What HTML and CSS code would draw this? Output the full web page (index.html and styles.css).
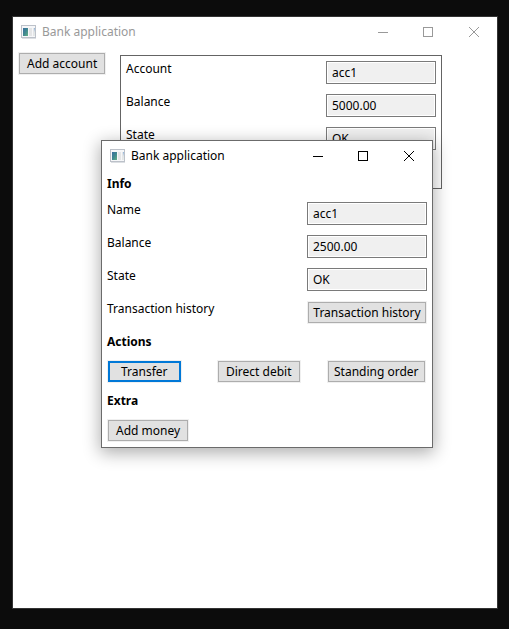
FILE: index.html
```html
<!DOCTYPE html>
<html lang="en">
<head>
<meta charset="utf-8">
<title>Bank application</title>
<link rel="stylesheet" href="styles.css">
</head>
<body>
<svg class="defs" aria-hidden="true">
  <defs>
    <linearGradient id="pane" x1="0" y1="0" x2="1" y2="1">
      <stop offset="0" stop-color="#3a6ea0"/>
      <stop offset="0.5" stop-color="#3f8790"/>
      <stop offset="1" stop-color="#63b083"/>
    </linearGradient>
    <linearGradient id="strip" x1="0" y1="0" x2="0" y2="1">
      <stop offset="0" stop-color="#8fb4dc"/>
      <stop offset="0.5" stop-color="#dfe5e8"/>
      <stop offset="1" stop-color="#e8ece8"/>
    </linearGradient>
    <symbol id="app" viewBox="0 0 16 14">
      <rect x="0.5" y="0.5" width="14" height="12" fill="#f6f7f9" stroke="#bcc1c9"/>
      <path d="M1 13.5H15" stroke="#dcdfe3"/>
      <rect x="2" y="3" width="5" height="8" fill="url(#pane)"/>
      <rect x="8" y="3" width="3" height="8" fill="#e4e5e6"/>
      <rect x="12" y="3" width="1" height="8" fill="#e4e5e6"/>
      <rect x="13" y="3" width="1" height="8" fill="url(#strip)"/>
    </symbol>
    <symbol id="min" viewBox="0 0 12 10"><path d="M2 5.5H12" stroke="currentColor"/></symbol>
    <symbol id="max" viewBox="0 0 12 10"><rect x="1.5" y="0.5" width="9" height="9" fill="none" stroke="currentColor"/></symbol>
    <symbol id="close" viewBox="0 0 12 10"><path d="M1 0L11 10M11 0L1 10" stroke="currentColor"/></symbol>
  </defs>
</svg>

<main class="window window-main">
  <header class="titlebar inactive">
    <svg class="app-icon"><use href="#app"/></svg>
    <h1 class="title">Bank application</h1>
    <button class="control" aria-label="Minimize"><svg><use href="#min"/></svg></button>
    <button class="control" aria-label="Maximize"><svg><use href="#max"/></svg></button>
    <button class="control" aria-label="Close"><svg><use href="#close"/></svg></button>
  </header>
  <div class="workspace">
    <button class="btn">Add account</button>
    <section class="card">
      <div class="row"><label for="a-name">Account</label><input class="field" id="a-name" value="acc1" readonly></div>
      <div class="row"><label for="a-balance">Balance</label><input class="field" id="a-balance" value="5000.00" readonly></div>
      <div class="row"><label for="a-state">State</label><input class="field" id="a-state" value="OK" readonly></div>
    </section>
  </div>
</main>

<section class="window dialog" role="dialog" aria-labelledby="dialog-title">
  <header class="titlebar">
    <svg class="app-icon"><use href="#app"/></svg>
    <h1 class="title" id="dialog-title">Bank application</h1>
    <button class="control" aria-label="Minimize"><svg><use href="#min"/></svg></button>
    <button class="control" aria-label="Maximize"><svg><use href="#max"/></svg></button>
    <button class="control" aria-label="Close"><svg><use href="#close"/></svg></button>
  </header>
  <div class="form">
    <h2 class="heading">Info</h2>
    <div class="row"><label for="d-name">Name</label><input class="field" id="d-name" value="acc1" readonly></div>
    <div class="row"><label for="d-balance">Balance</label><input class="field" id="d-balance" value="2500.00" readonly></div>
    <div class="row"><label for="d-state">State</label><input class="field" id="d-state" value="OK" readonly></div>
    <div class="row"><label for="d-history">Transaction history</label><button class="btn btn-fill" id="d-history">Transaction history</button></div>
    <h2 class="heading">Actions</h2>
    <div class="actions">
      <button class="btn btn-default">Transfer</button>
      <button class="btn">Direct debit</button>
      <button class="btn btn-tight">Standing order</button>
    </div>
    <h2 class="heading">Extra</h2>
    <div class="actions">
      <button class="btn">Add money</button>
    </div>
  </div>
</section>
</body>
</html>
```
FILE: styles.css
```css
* {
  box-sizing: border-box;
}

body {
  margin: 0;
  min-height: 100vh;
  padding: 16px 11px 20px 12px;
  display: flex;
  position: relative;
  background: #0c0c0c;
  color: #000;
  font: 12px/16px "Noto Sans", "Open Sans", sans-serif;
}

button,
input {
  margin: 0;
  font: inherit;
  color: inherit;
}

.defs {
  position: absolute;
  width: 0;
  height: 0;
}

.window {
  background: #fff;
  border: 1px solid #333;
}

.window-main {
  flex: 1;
}

.titlebar {
  display: flex;
  align-items: center;
  height: 30px;
  padding-left: 8px;
}

.inactive {
  color: #999;
}

.app-icon {
  width: 16px;
  height: 14px;
}

.title {
  flex: 1;
  margin: 0 0 0 5px;
  font-size: 12px;
  font-weight: 400;
}

.control {
  display: flex;
  align-items: center;
  justify-content: center;
  width: 46px;
  height: 28px;
  padding: 0;
  border: 0;
  background: none;
}

.control svg {
  width: 12px;
  height: 10px;
}

.workspace {
  display: grid;
  grid-template-columns: 89px 322px;
  align-items: start;
  justify-items: start;
  gap: 13px;
  padding: 5px;
}

.card {
  display: grid;
  gap: 10px;
  width: 100%;
  margin-top: 3px;
  padding: 5px 5px 38px;
  border: 1px solid #646464;
}

.row {
  display: flex;
  justify-content: space-between;
  align-items: flex-start;
}

.field {
  width: 110px;
  height: 23px;
  padding: 0 5px;
  border: 1px solid #7a7a7a;
  background: #f0f0f0;
  box-shadow: inset 0 0 0 1px #fff;
  outline: 0;
}

.btn {
  height: 21px;
  margin: 1px;
  padding: 0 7px;
  border: 1px solid #adadad;
  background: #e1e1e1;
  box-shadow: 0 0 0 1px #f0f0f0;
  line-height: 16px;
  white-space: nowrap;
}

.btn-fill {
  width: 118px;
  padding: 0 4px;
}

.btn-tight {
  padding: 0 5px;
}

.btn-default {
  border: 2px solid #0078d7;
  padding: 0 11px;
}

.dialog {
  position: absolute;
  left: 101px;
  top: 140px;
  width: 332px;
  border-color: #6b6b6b;
  box-shadow: 0 4px 16px 1px rgba(0, 0, 0, 0.32);
}

.form {
  display: grid;
  gap: 10px;
  padding: 5px;
}

.form .field {
  width: 120px;
}

.heading {
  margin: 0;
  font-size: 12px;
  font-weight: 700;
}

.actions {
  display: grid;
  grid-template-columns: repeat(3, minmax(0, 1fr));
  gap: 10px;
  justify-items: start;
}
```
